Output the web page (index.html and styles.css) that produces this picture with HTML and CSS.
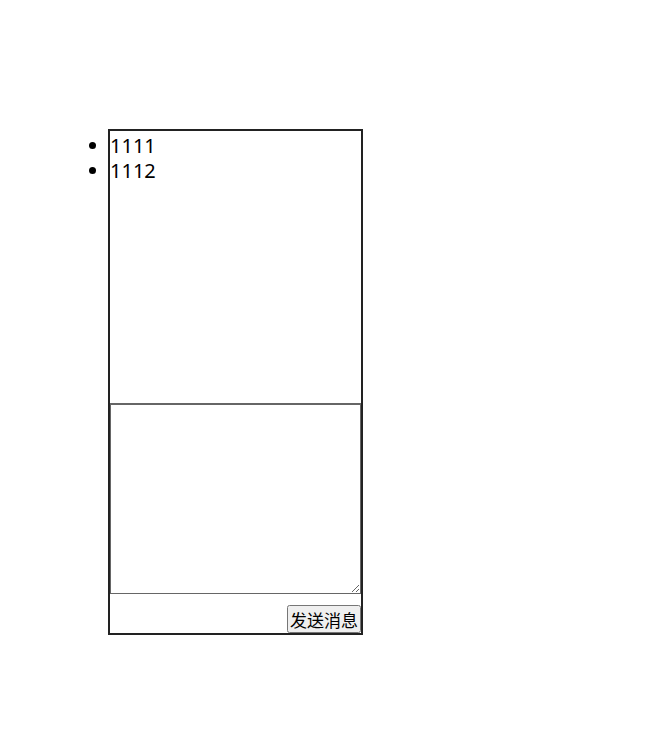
FILE: index.html
```html
<!DOCTYPE html>
<html lang="zh">
  <head>
    <meta charset="UTF-8" />
    <meta name="viewport" content="width=device-width, initial-scale=1.0" />
    <title>Chat</title>
    <link rel="stylesheet" href="styles.css">
  </head>
  <body>
    <!-- Chat box -->
    <div class="chat">
      <ul class="messages">
        <li>1111</li>
        <li>1112</li>
      </ul>
      <textarea class="msg-input"></textarea>
      <div class="send-row">
        <button class="send-button">发送消息</button>
      </div>
    </div>
  </body>
</html>
```

FILE: styles.css
```css
body {
  margin: 8px;
  font-family: "Noto Sans", "Noto Sans CJK SC", sans-serif;
}

.chat {
  width: 251px;
  margin: 121px 0 0 100px;
  border: 2px solid #222;
}

.messages {
  height: 270px;
  margin: 0;
  padding: 2px 0 0 0;
  font-size: 20px;
  line-height: 25px;
}

.msg-input {
  display: block;
  box-sizing: border-box;
  width: 251px;
  height: 191px;
  margin: 0;
  border: 1px solid #666;
  border-top-width: 2px;
  resize: vertical;
}

.send-row {
  margin-top: 11px;
  text-align: right;
  height: 28px;
}

.send-button {
  height: 28px;
  padding: 0 1px;
  font-size: 17px;
  font-family: "Noto Sans CJK SC", sans-serif;
  vertical-align: top;
}
```
